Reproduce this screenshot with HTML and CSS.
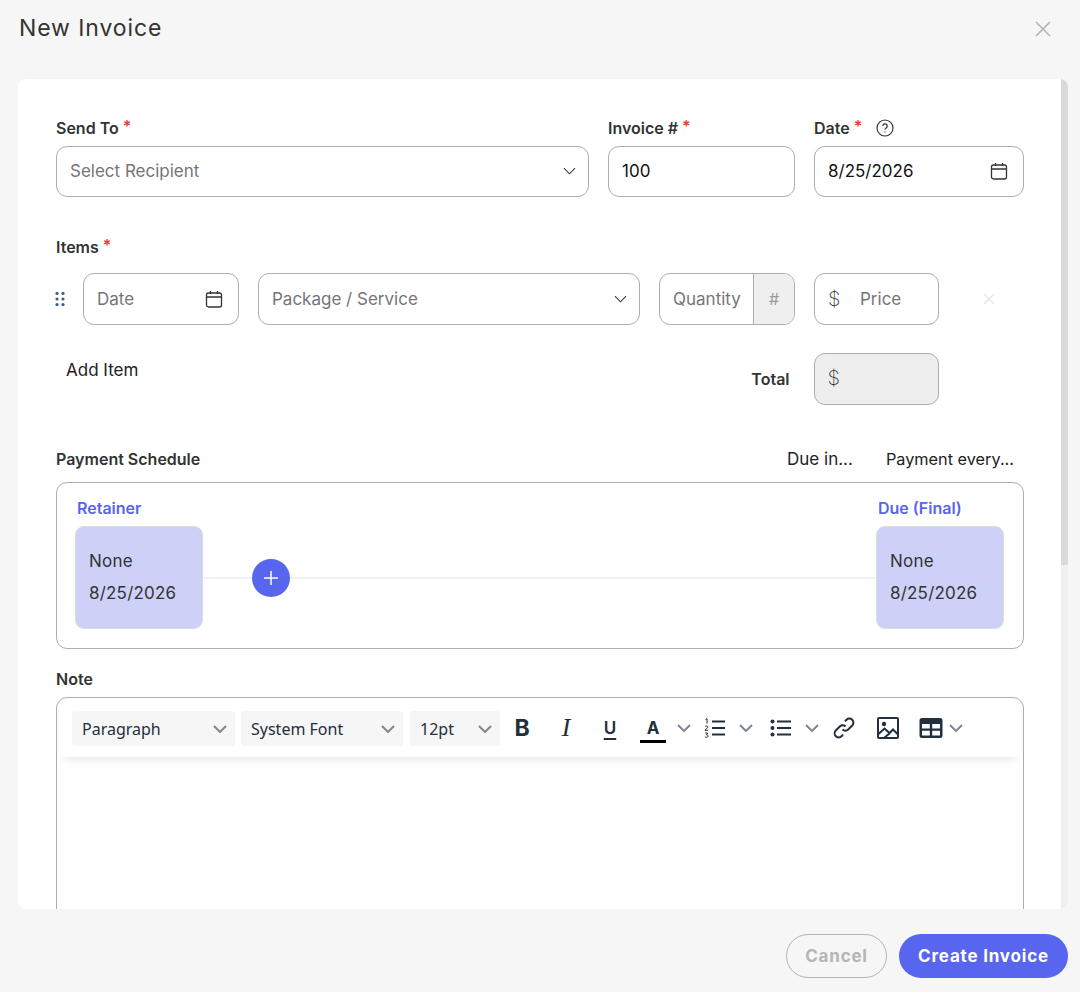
FILE: index.html
```html
<!DOCTYPE html>
<html>
<head>
    <title>New Invoice</title>
    <link rel="stylesheet" href="styles.css">
</head>
<body>
    <header class="modal-head">
        <h1>New Invoice</h1>
        <svg class="close-icon" width="18" height="18" viewBox="0 0 18 18"><path d="M2 2l14 14M16 2L2 16"/></svg>
    </header>

    <main class="modal-card">
        <div class="scroller">
            <div class="top-row">
                <div class="field">
                    <label>Send To <i>*</i></label>
                    <div class="box placeholder">
                        <span>Select Recipient</span>
                        <svg class="chev" width="14" height="8" viewBox="0 0 14 8"><path d="M1 1l6 6 6-6"/></svg>
                    </div>
                </div>
                <div class="field">
                    <label>Invoice # <i>*</i></label>
                    <div class="box"><span>100</span></div>
                </div>
                <div class="field">
                    <label>Date <i>*</i>
                        <svg class="help" width="18" height="18" viewBox="0 0 18 18"><circle cx="9" cy="9" r="8"/><path d="M6.800 7a2.200 2.200 0 1 1 3.400 1.900c-.8.500-1.200.900-1.200 1.700"/><path d="M9 12.600v.8"/></svg>
                    </label>
                    <div class="box">
                        <span>8/25/2026</span>
                        <svg class="cal" width="18" height="18" viewBox="0 0 18 18"><rect x="1.500" y="3" width="15" height="14" rx="2"/><path d="M1.500 7h15M5.500 1v3M12.500 1v3"/></svg>
                    </div>
                </div>
            </div>

            <section class="items">
                <label>Items <i>*</i></label>
                <div class="item-row">
                    <svg class="drag" width="10" height="14" viewBox="0 0 10 14"><circle cx="2" cy="1.500" r="1.600"/><circle cx="8" cy="1.500" r="1.600"/><circle cx="2" cy="7" r="1.600"/><circle cx="8" cy="7" r="1.600"/><circle cx="2" cy="12.500" r="1.600"/><circle cx="8" cy="12.500" r="1.600"/></svg>
                    <div class="box placeholder">
                        <span>Date</span>
                        <svg class="cal" width="18" height="18" viewBox="0 0 18 18"><rect x="1.500" y="3" width="15" height="14" rx="2"/><path d="M1.500 7h15M5.500 1v3M12.500 1v3"/></svg>
                    </div>
                    <div class="box placeholder">
                        <span>Package / Service</span>
                        <svg class="chev" width="14" height="8" viewBox="0 0 14 8"><path d="M1 1l6 6 6-6"/></svg>
                    </div>
                    <div class="box placeholder qty">
                        <span>Quantity</span>
                        <b class="addon">#</b>
                    </div>
                    <div class="box placeholder price">
                        <em class="dollar">$</em>
                        <span>Price</span>
                    </div>
                    <svg class="remove" width="12" height="12" viewBox="0 0 12 12"><path d="M1 1l10 10M11 1L1 11"/></svg>
                </div>
                <div class="totals">
                    <span class="add-item">Add Item</span>
                    <strong class="total-label">Total</strong>
                    <div class="box total-box"><em class="dollar">$</em></div>
                </div>
            </section>

            <section class="schedule">
                <div class="schedule-head">
                    <label>Payment Schedule</label>
                    <span class="due-in">Due in...</span>
                    <span class="every">Payment every...</span>
                </div>
                <div class="schedule-box">
                    <div class="stop">
                        <h4>Retainer</h4>
                        <div class="stop-card"><span>None</span><span>8/25/2026</span></div>
                    </div>
                    <div class="track">
                        <span class="add-stop">
                            <svg width="14" height="14" viewBox="0 0 14 14"><path d="M7 0v14M0 7h14"/></svg>
                        </span>
                    </div>
                    <div class="stop">
                        <h4>Due (Final)</h4>
                        <div class="stop-card"><span>None</span><span>8/25/2026</span></div>
                    </div>
                </div>
            </section>

            <section class="note">
                <label>Note</label>
                <div class="editor">
                    <div class="toolbar">
                        <div class="select sel-para">Paragraph <svg class="caret" width="14" height="8" viewBox="0 0 14 8"><path d="M1 1l6 6 6-6"/></svg></div>
                        <div class="select sel-font">System Font <svg class="caret" width="14" height="8" viewBox="0 0 14 8"><path d="M1 1l6 6 6-6"/></svg></div>
                        <div class="select sel-size">12pt <svg class="caret" width="14" height="8" viewBox="0 0 14 8"><path d="M1 1l6 6 6-6"/></svg></div>

                        <span class="tool t-bold">B</span>
                        <span class="tool t-italic">I</span>
                        <span class="tool t-under">U</span>
                        <span class="tool t-color">A</span>
                        <span class="tool-caret"><svg class="caret" width="14" height="8" viewBox="0 0 14 8"><path d="M1 1l6 6 6-6"/></svg></span>

                        <span class="tool">
                            <svg class="line-icon" width="22" height="22" viewBox="0 0 22 22"><path d="M8 4.500h13M8 11h13M8 17.500h13"/><path class="thin" d="M1.500 2.500l1.500-1v5M1 9.500c1-1 3-.6 2.800.8-.1 1-2.600 1.800-2.800 3h3M1.200 16h2.500l-1.200 1.800c1.500 0 1.700 1 1.500 1.700-.3 1-2 1-2.900.3"/></svg>
                        </span>
                        <span class="tool-caret"><svg class="caret" width="14" height="8" viewBox="0 0 14 8"><path d="M1 1l6 6 6-6"/></svg></span>

                        <span class="tool t-bullets">
                            <svg class="line-icon" width="22" height="22" viewBox="0 0 22 22"><path d="M7 4.500h14M7 11h14M7 17.500h14"/><circle cx="2.500" cy="4.500" r="2"/><circle cx="2.500" cy="11" r="2"/><circle cx="2.500" cy="17.500" r="2"/></svg>
                        </span>
                        <span class="tool-caret"><svg class="caret" width="14" height="8" viewBox="0 0 14 8"><path d="M1 1l6 6 6-6"/></svg></span>

                        <span class="tool t-link">
                            <svg class="stroke-icon" width="24" height="24" viewBox="0 0 24 24"><path d="M10.500 13.500a4 4 0 0 0 5.700 0l4-4a4 4 0 0 0-5.700-5.700l-1.600 1.600"/><path d="M13.500 10.500a4 4 0 0 0-5.700 0l-4 4a4 4 0 0 0 5.700 5.700l1.600-1.600"/></svg>
                        </span>
                        <span class="tool">
                            <svg class="stroke-icon" width="24" height="24" viewBox="0 0 24 24"><rect x="2" y="2" width="20" height="20" rx="1"/><circle class="solid" cx="8" cy="8" r="2.200"/><path d="M2.500 18l6-5.500 5 4.500 3.500-3.500 4.500 4.500M8 22l6-5"/></svg>
                        </span>
                        <span class="tool t-table">
                            <svg class="table-icon" width="24" height="20" viewBox="0 0 24 20"><path fill-rule="evenodd" d="M3 0h18a2.500 2.500 0 0 1 2.500 2.500v15A2.500 2.500 0 0 1 21 20H3a2.500 2.500 0 0 1-2.500-2.500v-15A2.500 2.500 0 0 1 3 0zM3 6v4.500h7.800V6zm10.200 0v4.500H21V6zM3 12.800v4.700h7.800v-4.700zm10.200 0v4.700H21v-4.700z"/></svg>
                        </span>
                        <span class="tool-caret t-last"><svg class="caret" width="14" height="8" viewBox="0 0 14 8"><path d="M1 1l6 6 6-6"/></svg></span>
                    </div>
                </div>
            </section>
        </div>
        <div class="scrollbar"><div class="thumb"></div></div>
    </main>

    <footer class="modal-foot">
        <button class="btn-cancel">Cancel</button>
        <button class="btn-create">Create Invoice</button>
    </footer>
</body>
</html>
```

FILE: styles.css
```css
:root {
    --primary: #5865ee;
    --line: #adadad;
    --text: #333333;
    --muted: #767676;
    --ink: #222f3e;
}

* {
    box-sizing: border-box;
}

body {
    margin: 0;
    height: 992px;
    overflow: hidden;
    display: flex;
    flex-direction: column;
    background: #f6f6f6;
    font-family: Inter, Roboto, sans-serif;
    font-size: 16px;
    color: var(--text);
}

.modal-head {
    height: 79px;
    flex: none;
    padding: 14px 28px 0 19px;
    display: flex;
    justify-content: space-between;
    align-items: flex-start;
}

.modal-head h1 {
    margin: 0;
    font-size: 23px;
    line-height: 28px;
    font-weight: 400;
    letter-spacing: 0.9px;
}

.close-icon {
    margin-top: 6px;
    stroke: #b4b4b4;
    stroke-width: 1.6;
    fill: none;
}

.modal-card {
    flex: none;
    height: 830px;
    margin: 0 12px 0 18px;
    background: #fff;
    border-radius: 8px;
    overflow: hidden;
    position: relative;
}

.scroller {
    padding: 39px 44px 0 38px;
}

.scrollbar {
    position: absolute;
    top: 0;
    right: 0;
    bottom: 0;
    width: 7px;
    background: #efefef;
}

.thumb {
    height: 486px;
    background: #dadada;
    border-radius: 0 6px 0 0;
}

label {
    display: block;
    font-size: 16px;
    line-height: 20px;
    font-weight: 600;
}

label i {
    color: #f03a2e;
    font-style: normal;
    position: relative;
    top: -2px;
}

.top-row {
    display: grid;
    grid-template-columns: 533px 187px 210px;
    column-gap: 19px;
}

.field label {
    margin-bottom: 8px;
    height: 20px;
    display: flex;
    align-items: center;
    gap: 4px;
}

.box {
    height: 51px;
    border: 1px solid var(--line);
    border-radius: 11px;
    padding: 0 13px 2px;
    display: flex;
    align-items: center;
    justify-content: space-between;
    color: #111;
    background: #fff;
    font-size: 17px;
}

.placeholder {
    color: var(--muted);
}

.chev {
    stroke: #333;
    stroke-width: 1.1;
    fill: none;
    width: 13px;
    margin-right: -1px;
}

.cal {
    stroke: #333;
    stroke-width: 1.3;
    fill: none;
    margin-right: 2px;
}

.help {
    margin-left: 10px;
    stroke: #333;
    stroke-width: 1.2;
    fill: none;
}

.items {
    margin-top: 40px;
}

.item-row {
    display: grid;
    grid-template-columns: 8px 156px 382px 136px 125px 12px;
    column-gap: 19px;
    align-items: center;
    margin-top: 16px;
}

.item-row .box {
    height: 52px;
    padding-bottom: 0;
}

.drag {
    fill: #3d6089;
    margin-left: -1px;
}

.remove {
    stroke: #e3e3e3;
    stroke-width: 1.3;
    fill: none;
    margin-left: 25px;
}

.item-row .qty {
    padding: 0 0 0 13px;
    overflow: hidden;
}

.addon {
    width: 41px;
    height: 100%;
    background: #efefef;
    border-left: 1px solid var(--line);
    color: #9a9a9a;
    font-size: 16px;
    font-weight: 400;
    display: flex;
    align-items: center;
    justify-content: center;
}

.price {
    justify-content: flex-start;
}

.dollar {
    font-style: normal;
    font-size: 20px;
    font-weight: 200;
    color: #333;
    width: 32px;
}

.totals {
    display: flex;
    align-items: flex-start;
    margin-top: 28px;
}

.add-item {
    margin: 7px 0 0 10px;
    line-height: 20px;
    color: #222;
    font-size: 17px;
}

.total-label {
    margin: 16px 0 0 613px;
    font-weight: 600;
    line-height: 20px;
}

.total-box {
    margin-left: 24px;
    width: 125px;
    height: 52px;
    background: #eeeeee;
    justify-content: flex-start;
}

.schedule {
    margin-top: 44px;
}

.schedule-head {
    display: flex;
    align-items: center;
    height: 20px;
}

.due-in {
    margin-left: auto;
    color: #222;
    font-size: 17px;
}

.every {
    margin: 0 10px 0 33px;
    color: #222;
    font-size: 16.3px;
}

.schedule-box {
    margin-top: 13px;
    height: 167px;
    border: 1px solid var(--line);
    border-radius: 11px;
    padding: 15px 19px 0 18px;
    display: flex;
    align-items: flex-start;
}

.stop h4 {
    margin: 0 0 8px 2px;
    line-height: 20px;
    font-size: 16px;
    font-weight: 600;
    color: var(--primary);
}

.stop-card {
    width: 128px;
    height: 103px;
    background: #cdd0f7;
    border: 1px solid #dcdcdc;
    border-radius: 9px;
    padding: 0 13px;
    display: flex;
    flex-direction: column;
    justify-content: center;
    gap: 11px;
    line-height: 21px;
    font-size: 17px;
    letter-spacing: 0.2px;
}

.track {
    flex: 1;
    height: 2px;
    background: #f1f1f1;
    margin-top: 79px;
    display: flex;
    align-items: center;
    padding-left: 49px;
}

.add-stop {
    width: 38px;
    height: 38px;
    flex: none;
    border-radius: 50%;
    background: var(--primary);
    display: flex;
    align-items: center;
    justify-content: center;
}

.add-stop svg {
    stroke: #fff;
    stroke-width: 1.5;
}

.note {
    margin-top: 20px;
}

.editor {
    margin-top: 8px;
    height: 320px;
    border: 1px solid var(--line);
    border-radius: 11px;
}

.toolbar {
    height: 59px;
    margin: 0 2px;
    padding: 13px 0 0 13px;
    display: flex;
    align-items: flex-start;
    box-shadow: 0 6px 8px -4px rgba(34, 47, 62, 0.12);
    font-family: "Noto Sans", "Open Sans", sans-serif;
    color: var(--ink);
}

.select {
    height: 35px;
    background: #f6f6f6;
    border-radius: 3px;
    padding: 1px 8px 0 10px;
    display: flex;
    align-items: center;
    justify-content: space-between;
}

.sel-para {
    width: 163px;
    margin-right: 6px;
}

.sel-font {
    width: 162px;
    margin-right: 7px;
}

.sel-size {
    width: 90px;
}

.caret {
    stroke: #808891;
    stroke-width: 2;
    fill: none;
}

.tool {
    width: 44px;
    height: 33px;
    flex: none;
    display: flex;
    align-items: center;
    justify-content: center;
    font-size: 22px;
}

.t-bold {
    font-family: Inter, sans-serif;
    font-weight: 700;
    font-size: 23px;
}

.t-italic {
    font-family: "Liberation Serif", serif;
    font-style: italic;
    font-size: 26px;
}

.t-under {
    font-family: Inter, sans-serif;
    font-size: 17px;
    font-weight: 600;
    text-decoration: underline;
    text-decoration-thickness: 2px;
    text-underline-offset: 4px;
}

.t-color {
    margin-left: -1px;
    font-family: Inter, sans-serif;
    font-size: 17px;
    font-weight: 700;
    position: relative;
}

.t-color::after {
    content: "";
    position: absolute;
    left: 9px;
    right: 9px;
    bottom: 1px;
    height: 3px;
    background: #000;
}

.tool-caret {
    width: 18px;
    height: 33px;
    flex: none;
    display: flex;
    align-items: center;
    justify-content: center;
}

.t-bullets {
    margin-left: 4px;
}

.t-link {
    margin-left: 1px;
}

.t-table {
    margin-left: -1px;
}

.t-last {
    margin-left: -6px;
}

.line-icon path {
    stroke: var(--ink);
    stroke-width: 2;
    fill: none;
}

.line-icon .thin {
    stroke-width: 1;
}

.line-icon circle {
    fill: var(--ink);
}

.stroke-icon {
    stroke: var(--ink);
    stroke-width: 2;
    fill: none;
}

.stroke-icon .solid {
    fill: var(--ink);
    stroke: none;
}

.table-icon {
    fill: var(--ink);
}

.modal-foot {
    flex: 1;
    display: flex;
    justify-content: flex-end;
    align-items: flex-start;
    gap: 12px;
    padding: 25px 12px 0 0;
}

.modal-foot button {
    height: 44px;
    border-radius: 22px;
    font-family: Inter, sans-serif;
    font-size: 17px;
    font-weight: 700;
    letter-spacing: 0.8px;
}

.btn-cancel {
    width: 101px;
    background: transparent;
    border: 1px solid #b5b5b5;
    color: #b5b5b5;
}

.btn-create {
    width: 169px;
    background: var(--primary);
    border: none;
    color: #fff;
}
```
